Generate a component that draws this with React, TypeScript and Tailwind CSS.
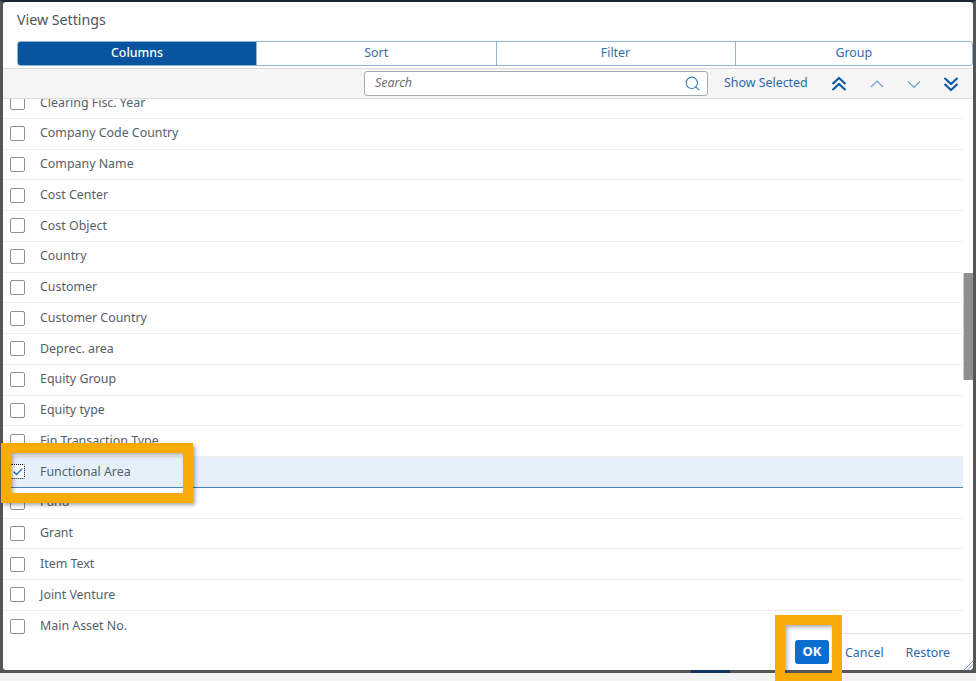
import { Search, Check } from 'lucide-react'

const rows = [
  'Clearing Fisc. Year',
  'Company Code Country',
  'Company Name',
  'Cost Center',
  'Cost Object',
  'Country',
  'Customer',
  'Customer Country',
  'Deprec. area',
  'Equity Group',
  'Equity type',
  'Fin Transaction Type',
  'Functional Area',
  'Fund',
  'Grant',
  'Item Text',
  'Joint Venture',
  'Main Asset No.',
]

const tabs = ['Columns', 'Sort', 'Filter', 'Group']

function Row({ label }: { label: string }) {
  const selected = label === 'Functional Area'
  const last = label === 'Main Asset No.'
  return (
    <div
      className={`flex h-[30.75px] shrink-0 items-center gap-[15px] pl-[7px] text-[12.4px] text-[#55606b] ${
        selected ? 'border-b border-[#3f86c4] bg-[#e5f0fa]' : last ? '' : 'border-b border-[#eeeeee]'
      }`}
    >
      <div
        className={`flex h-[15px] w-[15px] items-center justify-center rounded-[2px] bg-white ${
          selected ? 'border border-dotted border-black' : 'border border-[#89919a]'
        }`}
      >
        {selected && <Check className="h-3 w-3 text-[#0a6ed1]" strokeWidth={2.5} />}
      </div>
      <span>{label}</span>
    </div>
  )
}

export default function App() {
  return (
    <div className="relative h-[681px] w-[976px] overflow-hidden bg-[#f3f3f3] font-['Noto_Sans',sans-serif]">
      <div className="h-[673px] w-full border-x-[3px] border-b-[3px] border-t-2 border-[#555555] border-t-[#1d2530] bg-[#555555]">
        <div className="flex h-full flex-col overflow-hidden rounded-[3px] bg-white">
          <div className="flex h-[39px] shrink-0 items-center pb-[3px] pl-[14px] text-[14.2px] text-[#4a5560]">View Settings</div>

          <div className="ml-[14px] grid h-[25px] shrink-0 grid-cols-[238px_239.5px_239px_1fr] overflow-hidden rounded-[3px] border border-[#8fb4da] text-[12.4px]">
            {tabs.map((tab, i) => (
              <div
                key={tab}
                className={`flex items-center justify-center ${
                  i === 0 ? 'bg-[#0854a0] font-medium text-white' : 'border-l border-[#8fb4da] text-[#2f6fb0]'
                }`}
              >
                {tab}
              </div>
            ))}
          </div>

          <div className="mt-[2px] flex h-[31px] shrink-0 items-center border-y border-[#dcdcdc] bg-[#f5f5f5] pl-[361px]">
            <div className="flex h-[25px] w-[344px] items-center justify-between rounded-[3px] border border-[#a3abb3] bg-white pl-[10px] pr-[6px] text-[12.4px] italic text-[#6a7178]">
              <span>Search</span>
              <Search className="h-[17px] w-[17px] text-[#2f78b8]" strokeWidth={1.5} />
            </div>
            <span className="ml-4 w-[85px] whitespace-nowrap text-[12.4px] text-[#2a6aa8]">Show Selected</span>
            {/* sort arrows, lucide's are too narrow for these */}
            <svg className="ml-[22px] h-4 w-4 text-[#0f5ba8]" viewBox="0 0 16 16" fill="none" stroke="currentColor" strokeWidth="2.2">
              <path d="M1.500 8 8 2l6.500 6M1.500 14 8 8l6.500 6" />
            </svg>
            <svg className="ml-[22px] h-4 w-4 text-[#6f9fce]" viewBox="0 0 16 16" fill="none" stroke="currentColor" strokeWidth="1.2">
              <path d="M2 11 8 5l6 6" />
            </svg>
            <svg className="ml-[21px] h-4 w-4 text-[#6f9fce]" viewBox="0 0 16 16" fill="none" stroke="currentColor" strokeWidth="1.2">
              <path d="M2 5.500 8 11.500l6-6" />
            </svg>
            <svg className="ml-[21px] h-4 w-4 text-[#0f5ba8]" viewBox="0 0 16 16" fill="none" stroke="currentColor" strokeWidth="2.2">
              <path d="M1.500 2 8 8l6.500-6M1.500 8 8 14l6.500-6" />
            </svg>
          </div>

          <div className="relative min-h-0 flex-1 overflow-hidden">
            <div className="mr-[10px] -mt-[11px] flex flex-col">
              {rows.map((r) => (
                <Row key={r} label={r} />
              ))}
            </div>
            <div className="absolute right-0 top-[174px] h-[107px] w-[10px] border-l border-[#d0d0d0] bg-[#8e8e8e]" />
            <div className="absolute bottom-0 right-0 flex h-[37px] w-[141px] items-center border-t border-[#e4e4e4] pt-[2px] text-[12.4px] text-[#2a6aa8]">
              <span className="ml-[13px]">Cancel</span>
              <span className="ml-[22px]">Restore</span>
            </div>
            <div className="absolute bottom-[6px] right-[144px] flex h-[24px] w-[34px] items-center justify-center rounded-[3px] bg-[#0a6ed1] text-[13px] font-bold text-white">
              OK
            </div>
            <svg className="absolute bottom-0 right-0 h-[10px] w-[10px] text-[#6f9fce]" viewBox="0 0 10 10" fill="none" stroke="currentColor">
              <path d="M1 10 10 1M4.500 10 10 4.500M8 10 10 8" />
            </svg>
          </div>
        </div>
      </div>

      <div className="absolute left-[691px] top-[670px] h-[3px] w-[39px] bg-[#12335c]" />

      <div className="absolute left-[1px] top-[443px] h-[60px] w-[192px] border-[10px] border-[#f9ab0a] shadow-[2px_2px_4px_rgba(0,0,0,0.35),inset_2px_2px_4px_rgba(0,0,0,0.35)]" />
      <div className="absolute left-[775px] top-[615px] h-[66px] w-[67px] border-x-[10px] border-t-[10px] border-[#f9ab0a] shadow-[inset_2px_2px_4px_rgba(0,0,0,0.35)]">
        <div className="absolute bottom-0 -left-[10px] -right-[10px] h-[8px] bg-[#f9ab0a]" />
      </div>
    </div>
  )
}
